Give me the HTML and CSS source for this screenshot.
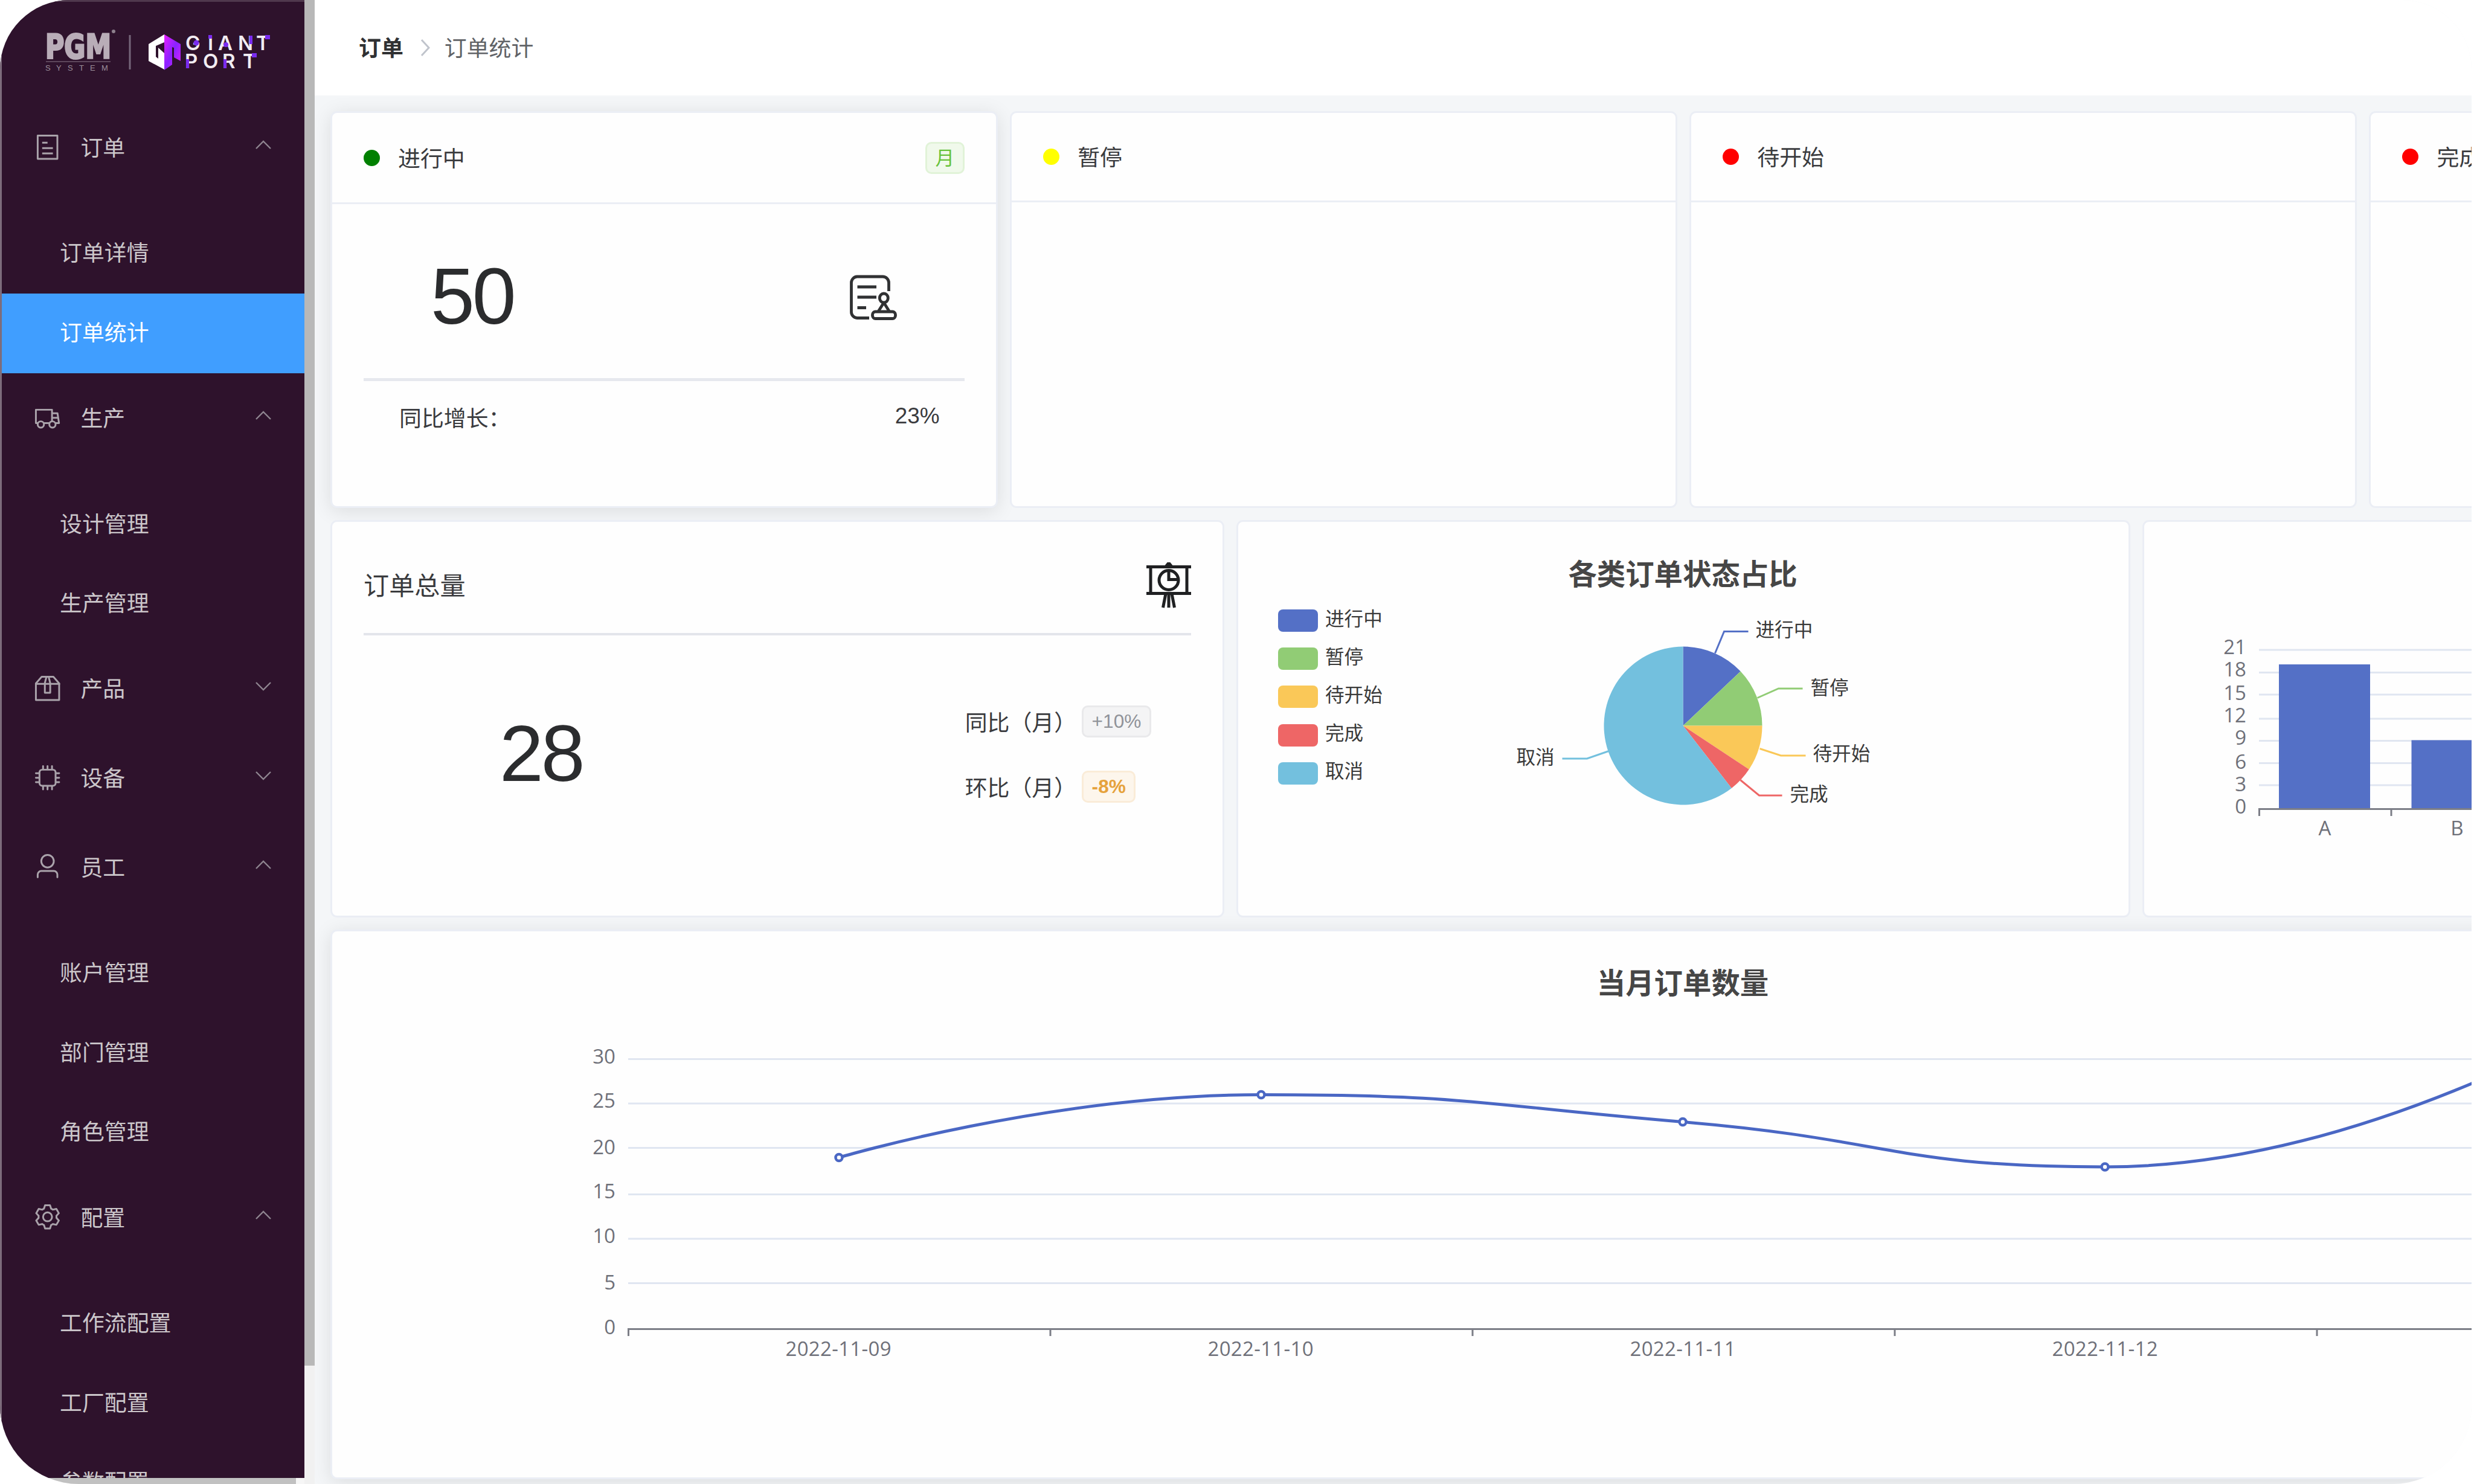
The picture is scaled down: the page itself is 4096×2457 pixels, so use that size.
FILE: index.html
```html
<!DOCTYPE html>
<html lang="zh-CN">
<head>
    <meta charset="UTF-8">
    <title>订单统计</title>
    <link rel="stylesheet" href="styles.css">
</head>
<body>
    <div class="app">
        <div class="side">
            <aside class="sidebar">
                <svg class="logo" viewBox="0 0 504 170">
                    <text class="logo-pgm" x="75" y="96" textLength="109" lengthAdjust="spacingAndGlyphs">PGM</text>
                    <circle cx="188" cy="52" r="3" fill="#8d7f8c"/>
                    <path d="M76 102H183" stroke="#5d465b" stroke-width="2"/>
                    <text class="logo-system" x="75 93 112 131 149 168" y="117">SYSTEM</text>
                    <path d="M215 58V115" stroke="#76667a" stroke-width="3"/>
                    <!-- cube mark -->
                    <path d="M272 57L246 73V101L272 115V88L262 79V97L258 94V76L272 70Z" fill="#fff"/>
                    <path d="M272 57L299 73V101L288 95V79L285 78V107L272 116Z" fill="url(#cube)"/>
                    <defs>
                        <linearGradient id="cube" x1="0" y1="0" x2="1" y2="1">
                            <stop offset="0" stop-color="#e81cff"/>
                            <stop offset=".5" stop-color="#8a22ff"/>
                            <stop offset="1" stop-color="#e020ff"/>
                        </linearGradient>
                    </defs>
                    <text class="logo-giant" x="307 344 361 394 424" y="83">GIANT</text>
                    <text class="logo-giant" x="306 336 368 402" y="113">PORT</text>
                    <g fill="#7a2cf0">
                        <circle cx="325" cy="71" r="4.5"/>
                        <rect x="345" y="58" width="6" height="6"/>
                        <circle cx="374" cy="74" r="4"/>
                        <rect x="413" y="59" width="5" height="14"/>
                        <rect x="439" y="58" width="8" height="7"/>
                        <rect x="308" y="98" width="5" height="15"/>
                        <rect x="370" y="98" width="5" height="15"/>
                        <rect x="417" y="88" width="8" height="7"/>
                    </g>
                </svg>
                <nav class="menu">
                    <div class="menu-title">
                        <svg class="menu-icon" viewBox="0 0 1024 1024"><path d="M192 128v768h640V128H192zm-32-64h704a32 32 0 0 1 32 32v832a32 32 0 0 1-32 32H160a32 32 0 0 1-32-32V96a32 32 0 0 1 32-32zm160 448h384v64H320v-64zm0-192h192v64H320v-64zm0 384h384v64H320v-64z"/></svg>
                        <span>订单</span>
                        <svg class="arrow" viewBox="0 0 28 16"><path d="M2 14L14 2L26 14"/></svg>
                    </div>
                    <div class="menu-group">
                        <div class="menu-item">订单详情</div>
                        <div class="menu-item active">订单统计</div>
                    </div>
                    <div class="menu-title">
                        <svg class="menu-icon" viewBox="0 0 1024 1024"><path d="M128.896 736H96a32 32 0 0 1-32-32V224a32 32 0 0 1 32-32h576a32 32 0 0 1 32 32v96h164.544a32 32 0 0 1 31.616 27.136l54.144 352A32 32 0 0 1 922.688 736h-91.52a144 144 0 1 1-286.272 0H415.104a144 144 0 1 1-286.272 0zm23.36-64a143.872 143.872 0 0 1 239.488 0H568.32c17.088-25.6 42.24-45.376 71.744-55.808V256H128v416h24.256zm655.488 0h77.632l-19.648-128H704v64.896A144 144 0 0 1 807.744 672zm48.128-192-14.72-96H704v96h151.872zM688 832a80 80 0 1 0 0-160 80 80 0 0 0 0 160zm-416 0a80 80 0 1 0 0-160 80 80 0 0 0 0 160z"/></svg>
                        <span>生产</span>
                        <svg class="arrow" viewBox="0 0 28 16"><path d="M2 14L14 2L26 14"/></svg>
                    </div>
                    <div class="menu-group">
                        <div class="menu-item">设计管理</div>
                        <div class="menu-item">生产管理</div>
                    </div>
                    <div class="menu-title">
                        <svg class="menu-icon" viewBox="0 0 1024 1024"><path d="M317.056 128 128 344.064V896h768V344.064L706.944 128H317.056zm-14.528-64h418.944a32 32 0 0 1 24.064 10.88l206.528 236.096A32 32 0 0 1 960 332.032V928a32 32 0 0 1-32 32H96a32 32 0 0 1-32-32V332.032a32 32 0 0 1 7.936-21.12L278.4 75.008A32 32 0 0 1 302.528 64z"/><path d="M64 320h896v64H64z"/><path d="M448 327.872V640h128V327.872L526.08 128h-28.16L448 327.872zM448 64h128l64 256v352a32 32 0 0 1-32 32H416a32 32 0 0 1-32-32V320l64-256z"/></svg>
                        <span>产品</span>
                        <svg class="arrow" viewBox="0 0 28 16"><path d="M2 2L14 14L26 2"/></svg>
                    </div>
                    <div class="menu-title">
                        <svg class="menu-icon" viewBox="0 0 1024 1024"><path d="M320 256a64 64 0 0 0-64 64v384a64 64 0 0 0 64 64h384a64 64 0 0 0 64-64V320a64 64 0 0 0-64-64H320zm0-64h384a128 128 0 0 1 128 128v384a128 128 0 0 1-128 128H320a128 128 0 0 1-128-128V320a128 128 0 0 1 128-128z"/><path class="pins" d="M352 96V210M512 96V210M672 96V210M352 814V928M512 814V928M672 814V928M96 352H210M96 512H210M96 672H210M814 352H928M814 512H928M814 672H928"/></svg>
                        <span>设备</span>
                        <svg class="arrow" viewBox="0 0 28 16"><path d="M2 2L14 14L26 2"/></svg>
                    </div>
                    <div class="menu-title">
                        <svg class="menu-icon" viewBox="0 0 1024 1024"><path d="M512 512a192 192 0 1 0 0-384 192 192 0 0 0 0 384zm0 64a256 256 0 1 1 0-512 256 256 0 0 1 0 512zm320 320v-96a96 96 0 0 0-96-96H288a96 96 0 0 0-96 96v96a32 32 0 1 1-64 0v-96a160 160 0 0 1 160-160h448a160 160 0 0 1 160 160v96a32 32 0 1 1-64 0z"/></svg>
                        <span>员工</span>
                        <svg class="arrow" viewBox="0 0 28 16"><path d="M2 14L14 2L26 14"/></svg>
                    </div>
                    <div class="menu-group">
                        <div class="menu-item">账户管理</div>
                        <div class="menu-item">部门管理</div>
                        <div class="menu-item">角色管理</div>
                    </div>
                    <div class="menu-title">
                        <svg class="menu-icon" viewBox="0 0 1024 1024"><path d="M600.704 64a32 32 0 0 1 30.464 22.208l35.2 109.376c14.784 7.232 28.928 15.36 42.432 24.512l112.384-24.192a32 32 0 0 1 34.432 15.36L944.32 364.8a32 32 0 0 1-4.032 37.504l-77.12 85.12a357.12 357.12 0 0 1 0 49.024l77.12 85.248a32 32 0 0 1 4.032 37.504l-88.704 153.6a32 32 0 0 1-34.432 15.296L708.8 803.904c-13.44 9.088-27.648 17.28-42.368 24.512l-35.264 109.376A32 32 0 0 1 600.704 960H423.296a32 32 0 0 1-30.464-22.208L357.696 828.48a351.616 351.616 0 0 1-42.56-24.64l-112.32 24.256a32 32 0 0 1-34.432-15.36L79.68 659.2a32 32 0 0 1 4.032-37.504l77.12-85.248a357.12 357.12 0 0 1 0-48.896l-77.12-85.248A32 32 0 0 1 79.68 364.8l88.704-153.6a32 32 0 0 1 34.432-15.296l112.32 24.256c13.568-9.152 27.776-17.408 42.56-24.64l35.2-109.312A32 32 0 0 1 423.232 64H600.64zm-23.424 64H446.72l-36.352 113.088-24.512 11.968a294.113 294.113 0 0 0-34.816 20.096l-22.656 15.36-116.224-25.088-65.28 113.152 79.68 88.192-1.92 27.136a293.12 293.12 0 0 0 0 40.192l1.92 27.136-79.808 88.192 65.344 113.152 116.224-25.024 22.656 15.296a294.113 294.113 0 0 0 34.816 20.096l24.512 11.968L446.72 896h130.688l36.48-113.152 24.448-11.904a288.282 288.282 0 0 0 34.752-20.096l22.592-15.296 116.288 25.024 65.28-113.152-79.744-88.192 1.92-27.136a293.12 293.12 0 0 0 0-40.256l-1.92-27.136 79.808-88.128-65.344-113.152-116.288 24.96-22.592-15.232a287.616 287.616 0 0 0-34.752-20.096l-24.448-11.904L577.344 128zM512 320a192 192 0 1 1 0 384 192 192 0 0 1 0-384zm0 64a128 128 0 1 0 0 256 128 128 0 0 0 0-256z"/></svg>
                        <span>配置</span>
                        <svg class="arrow" viewBox="0 0 28 16"><path d="M2 14L14 2L26 14"/></svg>
                    </div>
                    <div class="menu-group">
                        <div class="menu-item">工作流配置</div>
                        <div class="menu-item">工厂配置</div>
                        <div class="menu-item">参数配置</div>
                    </div>
                </nav>
            </aside>
            <div class="scroll-x"><div class="thumb-x"></div></div>
        </div>
        <div class="scroll-y"><div class="thumb-y"></div></div>

        <div class="page">
            <header class="header">
                <b>订单</b>
                <svg class="sep" viewBox="0 0 16 30"><path d="M2 2L14 15L2 28"/></svg>
                <span>订单统计</span>
            </header>
            <main class="main">
                <section class="row row-status">
                    <div class="card shadow">
                        <div class="card-header tall">
                            <i class="dot green"></i><span>进行中</span>
                            <em class="tag success">月</em>
                        </div>
                        <div class="status-body">
                            <div class="status-top">
                                <span class="big">50</span>
                                <svg class="stamp" viewBox="0 0 78 75">
                                    <path d="M64.5 27V13a10 10 0 0 0-10-10H12A10 10 0 0 0 2.5 13v48a10 10 0 0 0 9.500 10.500H32M12.500 20H44M12.500 37H44M12.500 54.500H27"/>
                                    <ellipse cx="56.300" cy="38.500" rx="7" ry="7.500"/>
                                    <path d="M56.300 46L47.500 60M56.300 46L65 60"/>
                                    <rect x="37.500" y="61" width="38" height="11.500" rx="5"/>
                                </svg>
                            </div>
                            <div class="status-bottom">
                                <span>同比增长：</span>
                                <span class="rate">23%</span>
                            </div>
                        </div>
                    </div>
                    <div class="card">
                        <div class="card-header"><i class="dot yellow"></i><span>暂停</span></div>
                    </div>
                    <div class="card">
                        <div class="card-header"><i class="dot red"></i><span>待开始</span></div>
                    </div>
                    <div class="card">
                        <div class="card-header"><i class="dot red"></i><span>完成</span></div>
                    </div>
                </section>

                <section class="row row-charts">
                    <div class="card total">
                        <div class="total-header">
                            <span>订单总量</span>
                            <svg class="board" viewBox="0 0 74 76">
                                <path d="M0 7.500H74M0 51.500H74M7 7V51M67 7V51"/>
                                <circle cx="37" cy="29.500" r="16"/>
                                <path d="M37 14V28.500H52M32 52L27.500 75M37 52V75M42 52L46.500 75"/>
                                <path d="M33 6L37 1L41 6Z"/>
                            </svg>
                        </div>
                        <div class="total-body">
                            <span class="big">28</span>
                            <div class="compare">
                                <div class="compare-row">同比（月）<em class="tag info">+10%</em></div>
                                <div class="compare-row">环比（月）<em class="tag warning">-8%</em></div>
                            </div>
                        </div>
                    </div>
                    <div class="card">
                        <svg class="chart" width="1474" height="652" viewBox="0 0 1474 652">
                            <text class="chart-title" x="736" y="104">各类订单状态占比</text>
                            <g class="legend">
                                <rect x="66" y="145" width="66" height="37" rx="8" fill="#5470c6"/><text x="144" y="172">进行中</text>
                                <rect x="66" y="208" width="66" height="37" rx="8" fill="#91cc75"/><text x="144" y="235">暂停</text>
                                <rect x="66" y="271" width="66" height="37" rx="8" fill="#fac858"/><text x="144" y="298">待开始</text>
                                <rect x="66" y="335" width="66" height="37" rx="8" fill="#ee6666"/><text x="144" y="361">完成</text>
                                <rect x="66" y="398" width="66" height="37" rx="8" fill="#73c0de"/><text x="144" y="424">取消</text>
                            </g>
                            <g transform="translate(736.5 337.5)">
                                <path fill="#5470c6" d="M0 0V-131A131 131 0 0 1 95.200 -90Z"/>
                                <path fill="#91cc75" d="M0 0L95.200 -90A131 131 0 0 1 131 0Z"/>
                                <path fill="#fac858" d="M0 0H131A131 131 0 0 1 109.200 72.300Z"/>
                                <path fill="#ee6666" d="M0 0L109.200 72.300A131 131 0 0 1 80.300 103.500Z"/>
                                <path fill="#73c0de" d="M0 0L80.300 103.500A131 131 0 1 1 0 -131Z"/>
                                <g class="leader">
                                    <path stroke="#5470c6" d="M53 -120L68 -156H108"/>
                                    <path stroke="#91cc75" d="M123 -46L158 -61.500H198"/>
                                    <path stroke="#fac858" d="M127 38L162 49.500H203"/>
                                    <path stroke="#ee6666" d="M95 90L126 115.500H164"/>
                                    <path stroke="#73c0de" d="M-123 42L-159 54.500H-200"/>
                                </g>
                                <g class="legend">
                                    <text x="120" y="-148">进行中</text>
                                    <text x="211" y="-52">暂停</text>
                                    <text x="215" y="57">待开始</text>
                                    <text x="177" y="124">完成</text>
                                    <text x="-276" y="63">取消</text>
                                </g>
                            </g>
                        </svg>
                    </div>
                    <div class="card">
                        <svg class="chart" width="1474" height="652" viewBox="0 0 1474 652">
                            <path class="grid" d="M190 212H1300M190 249.500H1300M190 286H1300M190 326H1300M190 362.500H1300M190 399.500H1300M190 436H1300"/>
                            <rect x="223" y="236" width="151" height="239" fill="#5470c6"/>
                            <rect x="442.500" y="361.500" width="151" height="114" fill="#5470c6"/>
                            <path class="axis" d="M189 475.500H1300M190.500 475V487M409 475V487"/>
                            <g class="label end">
                                <text x="169" y="219">21</text>
                                <text x="169" y="256">18</text>
                                <text x="169" y="295">15</text>
                                <text x="169" y="332">12</text>
                                <text x="169" y="369">9</text>
                                <text x="169" y="409">6</text>
                                <text x="169" y="446">3</text>
                                <text x="169" y="483">0</text>
                            </g>
                            <g class="label">
                                <text x="299" y="519">A</text>
                                <text x="518" y="519">B</text>
                            </g>
                        </svg>
                    </div>
                </section>

                <section class="row row-line">
                    <div class="card shadow">
                        <svg class="chart" width="4474" height="904" viewBox="0 0 4474 904">
                            <text class="chart-title" x="2236" y="103">当月订单数量</text>
                            <path class="grid" d="M490 211.500H3986M490 285H3986M490 358.500H3986M490 435.500H3986M490 509H3986M490 582.500H3986"/>
                            <path class="axis" d="M489 658.500H3986M490.500 658V670M1189 658V670M1888 658V670M2587 658V670M3286 658V670"/>
                            <path class="line" d="M839 374.500C839 374.500 1188 270.500 1538 270.500C1887 270.500 1887 286 2236 315.500C2586 345 2586 390 2935 390Q3212 390 3542 252L3634 214"/>
                            <g class="point">
                                <circle cx="839" cy="374.500" r="5.500"/>
                                <circle cx="1538" cy="270.500" r="5.500"/>
                                <circle cx="2236" cy="315.500" r="5.500"/>
                                <circle cx="2935" cy="390" r="5.500"/>
                            </g>
                            <g class="label end">
                                <text x="469" y="219">30</text>
                                <text x="469" y="292">25</text>
                                <text x="469" y="369">20</text>
                                <text x="469" y="442">15</text>
                                <text x="469" y="516">10</text>
                                <text x="469" y="593">5</text>
                                <text x="469" y="667">0</text>
                            </g>
                            <g class="label">
                                <text x="838" y="703" textLength="175">2022-11-09</text>
                                <text x="1537" y="703" textLength="175">2022-11-10</text>
                                <text x="2236" y="703" textLength="175">2022-11-11</text>
                                <text x="2935" y="703" textLength="175">2022-11-12</text>
                            </g>
                        </svg>
                    </div>
                </section>
            </main>
        </div>
    </div>
</body>
</html>
```
FILE: styles.css
```css
* {
    box-sizing: border-box;
}
body {
    margin: 0;
    background-color: #fff;
    font-family: "Liberation Sans", "Noto Sans CJK SC", sans-serif;
    font-size: 36.9px;
    color: #3a3b3e;
    overflow: hidden;
}
svg {
    display: block;
    flex: none;
}
.app {
    display: flex;
    width: 4092px;
    height: 2457px;
    border-radius: 115px 115px 130px 130px;
    overflow: hidden;
}

/* sidebar */
.side {
    flex: none;
    width: 504px;
    display: flex;
    flex-direction: column;
}
.sidebar {
    height: 2447px;
    background-color: #2e122c;
    border-left: 3px solid #7d6c7c;
    box-shadow: inset 0 3px #4f384d;
    overflow: hidden;
}
.logo {
    width: 504px;
    height: 170px;
    margin-left: -3px;
}
.logo-pgm {
    font: bold 56px "DejaVu Sans", sans-serif;
    fill: #b9adb8;
    stroke: #b9adb8;
    stroke-width: 3;
}
.logo-system {
    font: 13px "Liberation Sans", sans-serif;
    fill: #9b8e9a;
}
.logo-giant {
    font: 600 33px Inter, sans-serif;
    fill: #f1ecf2;
}
.menu {
    margin-left: -3px;
    color: #cbc6ca;
}
.menu-title {
    display: flex;
    align-items: center;
    height: 147.6px;
    padding: 0 54px 0 55px;
}
.menu-title span {
    flex: 1;
    margin-left: 31px;
    padding-bottom: 3px;
}
.menu-icon {
    width: 47.4px;
    height: 47.4px;
    fill: #aaa3ab;
}
.pins {
    stroke: #aaa3ab;
    stroke-width: 64;
    stroke-linecap: round;
}
.arrow {
    width: 28px;
    height: 16px;
    margin-top: -7px;
    fill: none;
    stroke: #8f8590;
    stroke-width: 2.4;
}
.menu-group {
    padding-top: 36.9px;
}
.menu-item {
    height: 131.8px;
    line-height: 131.8px;
    padding-left: 99px;
}
.menu-item.active {
    color: #fff;
    background-color: #409eff;
}
.scroll-x {
    height: 10px;
    background-color: #f6f6f6;
}
.thumb-x {
    width: 490px;
    height: 10px;
    background-color: #c1c1c1;
}
.scroll-y {
    flex: none;
    width: 17px;
    background-color: #f1f1f1;
}
.thumb-y {
    height: 2261px;
    background-color: #b8b8b8;
}

/* page */
.page {
    flex: 1;
    min-width: 0;
    display: flex;
    flex-direction: column;
    overflow: hidden;
    background-color: #f4f6f8;
}
.header {
    flex: none;
    display: flex;
    align-items: center;
    height: 158px;
    padding: 0 0 4px 73px;
    background-color: #fff;
    color: #606266;
}
.header b {
    color: #303133;
}
.sep {
    width: 16px;
    height: 30px;
    margin: 3px 24px 0 28px;
    fill: none;
    stroke: #c0c4cc;
    stroke-width: 3;
}
.main {
    width: 4532px;
    padding: 26px;
}
.row {
    display: grid;
    gap: 20.500px;
    margin-bottom: 20px;
}
.row-status {
    grid-template-columns: repeat(4, 1fr);
    height: 657px;
}
.row-charts {
    grid-template-columns: repeat(3, 1fr);
    height: 658px;
}
.row-line {
    height: 910px;
}
.card {
    min-width: 0;
    background-color: #fefefe;
    border: 3px solid #ebeef5;
    border-radius: 11px;
    overflow: hidden;
}
.card.shadow {
    box-shadow: 0 5px 32px rgba(0, 0, 0, 0.1);
}
.card-header {
    display: flex;
    align-items: center;
    height: 148px;
    padding: 0 52px;
    border-bottom: 3px solid #ebeef5;
}
.card-header.tall {
    height: 151px;
}
.card-header span {
    padding-bottom: 3px;
}
.dot {
    width: 27px;
    height: 27px;
    margin-right: 30px;
    border-radius: 50%;
}
.green {
    background-color: #008000;
}
.yellow {
    background-color: #ffff00;
}
.red {
    background-color: #ff0000;
}
.tag {
    display: flex;
    align-items: center;
    height: 53px;
    padding: 0 13.500px;
    border: 3px solid;
    border-radius: 10px;
    font-size: 31.6px;
    font-style: normal;
}
.card-header .tag {
    margin-left: auto;
    padding-bottom: 4px;
}
.success {
    color: #67c23a;
    background-color: #f0f9eb;
    border-color: #e1f3d8;
}
.info {
    color: #909399;
    background-color: #f4f4f5;
    border-color: #e9e9eb;
}
.warning {
    color: #e6a23c;
    background-color: #fdf6ec;
    border-color: #faecd8;
    font-weight: bold;
}
.big {
    font-size: 131px;
    line-height: 150px;
    letter-spacing: -4px;
    color: #2b2c2e;
}

/* order status card */
.status-body {
    padding: 0 52px;
}
.status-top {
    display: flex;
    justify-content: space-between;
    align-items: center;
    height: 293px;
    padding: 18px 112px 0 111px;
    border-bottom: 5px solid #e6e8ee;
}
.stamp {
    width: 78px;
    height: 75px;
    margin-top: 3px;
    fill: none;
    stroke: #303133;
    stroke-width: 4.800;
}
.status-bottom {
    display: flex;
    justify-content: space-between;
    height: 120px;
    padding: 0 41px 0 59px;
    line-height: 126px;
}
.rate {
    line-height: 116px;
}

/* order total card */
.total {
    padding: 0 52px;
}
.total-header {
    display: flex;
    justify-content: space-between;
    align-items: center;
    height: 188px;
    padding-top: 26px;
    border-bottom: 4px solid #e3e5eb;
    font-size: 42.2px;
}
.total-header span {
    padding-bottom: 6px;
}
.board {
    width: 74px;
    height: 76px;
    fill: none;
    stroke: #1f2022;
    stroke-width: 5;
}
.total-body {
    display: flex;
    justify-content: space-between;
    padding: 88px 66px 0 225px;
}
.total-body .big {
    margin-top: 33px;
}
.compare {
    width: 308px;
}
.compare-row {
    display: flex;
    align-items: center;
    height: 108px;
    white-space: nowrap;
}
.compare-row .tag {
    margin-left: 9px;
}

/* charts */
.chart-title {
    font-size: 47.4px;
    font-weight: bold;
    fill: #464646;
    text-anchor: middle;
}
.legend text {
    font-size: 31.6px;
    fill: #3a3a3a;
}
.leader path {
    fill: none;
    stroke-width: 3;
}
.grid {
    stroke: #e0e6f1;
    stroke-width: 3;
}
.axis {
    fill: none;
    stroke: #7c7e87;
    stroke-width: 3;
}
.label text {
    font: 33px "Open Sans", sans-serif;
    fill: #6e7079;
    text-anchor: middle;
}
.label.end text {
    text-anchor: end;
}
.line {
    fill: none;
    stroke: #4a67c4;
    stroke-width: 5;
}
.point circle {
    fill: #fff;
    stroke: #4a67c4;
    stroke-width: 4.500;
}
```
